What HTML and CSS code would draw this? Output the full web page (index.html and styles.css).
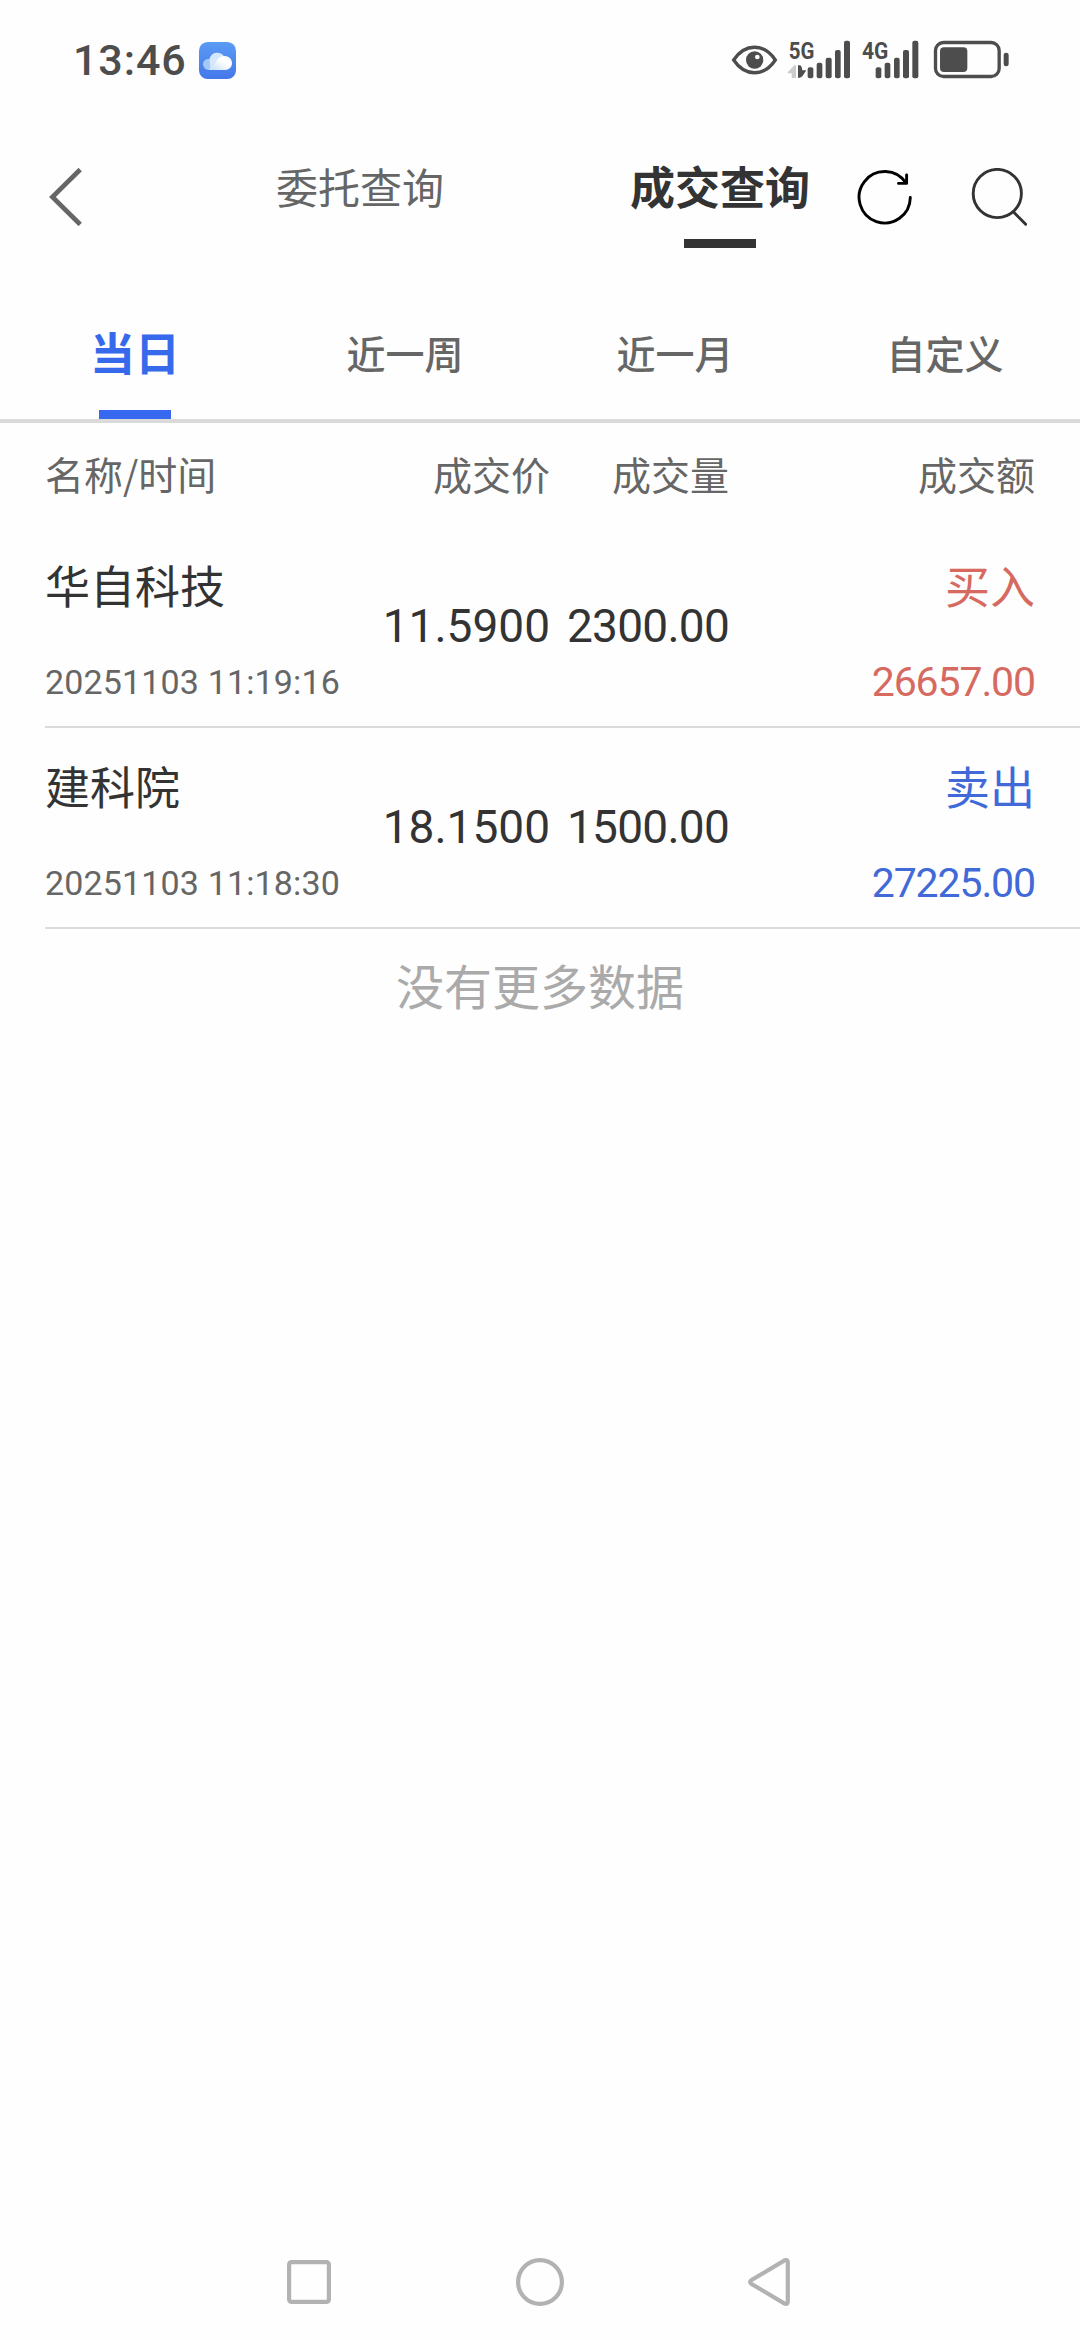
FILE: index.html
```html
<!DOCTYPE html>
<html lang="zh-CN">
<head>
<meta charset="utf-8">
<title>成交查询</title>
<link rel="stylesheet" href="styles.css">
</head>
<body>
<div class="status">
  <span class="clock">13:46</span>
  <svg width="37" height="37" viewBox="0 0 111 111">
    <defs>
      <linearGradient id="sky" x1="0" y1="0" x2="0" y2="1"><stop offset="0" stop-color="#5a9bf3"/><stop offset="1" stop-color="#4577ea"/></linearGradient>
      <linearGradient id="puff" x1="0" y1="1" x2="1" y2="0"><stop offset="0" stop-color="#c3dcfb"/><stop offset=".6" stop-color="#fff"/></linearGradient>
    </defs>
    <rect width="111" height="111" rx="26" fill="url(#sky)"/>
    <circle cx="29" cy="67" r="17" fill="#a5c8f7"/>
    <path d="M29 84C38 82 32 70 32 49A24 24 0 0 1 75 43L50 84Z" fill="#d5e7fc"/>
    <path d="M34 84C48 80 47 43 76 42C90 42 99 52 99 63C99 75 90 84 79 84Z" fill="url(#puff)"/>
  </svg>
  <svg class="indicators" width="280" height="60" viewBox="30 30 840 180" fill="#4d4d4d">
    <path d="M41 120C75 69 132 69 166 120C132 171 75 171 41 120Z" fill="none" stroke="#4d4d4d" stroke-width="10"/>
    <circle cx="104" cy="120" r="26"/><circle cx="112" cy="111" r="7" fill="#fff"/>
    <text class="net" x="206" y="116" textLength="77" lengthAdjust="spacingAndGlyphs">5G</text>
    <path d="M203 157L224 135Q228 135 228 139V174H215V160H203Z" fill="#ccc"/>
    <path d="M234 136H241Q246 139 247 151H259L247 169Q242 174 234 174Z"/>
    <rect x="263" y="142" width="17" height="33" rx="6"/><rect x="290" y="128" width="17" height="47" rx="6"/><rect x="317" y="113" width="18" height="62" rx="6"/><rect x="345" y="90" width="17" height="85" rx="6"/><rect x="372" y="62" width="18" height="113" rx="6"/>
    <text class="net" x="426" y="116" textLength="79" lengthAdjust="spacingAndGlyphs">4G</text>
    <rect x="467" y="142" width="17" height="33" rx="6"/><rect x="494" y="128" width="17" height="47" rx="6"/><rect x="522" y="113" width="17" height="62" rx="6"/><rect x="549" y="90" width="18" height="85" rx="6"/><rect x="577" y="62" width="18" height="113" rx="6"/>
    <rect x="646.500" y="67.500" width="191" height="102" rx="24" fill="none" stroke="#4d4d4d" stroke-width="10"/>
    <rect x="660" y="82" width="82" height="74" rx="12"/><rect x="851" y="98" width="15" height="41" rx="7"/>
  </svg>
</div>

<header class="header">
  <div class="back"><svg width="35" height="58" viewBox="0 0 35 58" fill="none" stroke="#666" stroke-width="4.700"><path d="M32.200 1.500L4.400 29L32.200 56.500"/></svg></div>
  <div class="page-tab">委托查询</div>
  <div class="page-tab current">成交查询</div>
  <svg class="refresh" width="56" height="58" viewBox="0 0 56 58" fill="none" stroke="#000" stroke-width="2.900" stroke-linecap="round" stroke-linejoin="round"><path d="M53.300 29.500A25.600 25.700 0 1 1 49 15M49.600 7V15.400H41.500"/></svg>
  <svg class="search" width="56" height="58" viewBox="0 0 56 58" fill="none" stroke="#333" stroke-width="2.900" stroke-linecap="round"><circle cx="26.300" cy="25.500" r="24.100"/><path d="M42.500 44L54.700 56.300"/></svg>
</header>

<nav class="ranges">
  <div class="range active">当日</div>
  <div class="range">近一周</div>
  <div class="range">近一月</div>
  <div class="range">自定义</div>
</nav>

<main>
  <div class="cols heads"><span>名称/时间</span><span>成交价</span><span>成交量</span><span>成交额</span></div>
  <section class="cols trade">
    <div class="cell"><span class="name">华自科技</span><span class="time">20251103 11:19:16</span></div>
    <span class="price">11.5900</span>
    <span class="qty">2300.00</span>
    <div class="cell end buy"><span class="name">买入</span><span class="amount">26657.00</span></div>
  </section>
  <section class="cols trade">
    <div class="cell"><span class="name">建科院</span><span class="time">20251103 11:18:30</span></div>
    <span class="price">18.1500</span>
    <span class="qty">1500.00</span>
    <div class="cell end sell"><span class="name">卖出</span><span class="amount">27225.00</span></div>
  </section>
  <p class="nomore">没有更多数据</p>
</main>

<footer class="sysnav">
  <svg width="44" height="48" viewBox="0 0 44 48"><rect x="2.100" y="4.100" width="39.800" height="39.800" rx="2.500"/></svg>
  <svg width="48" height="48" viewBox="0 0 48 48"><circle cx="24" cy="24" r="21.900"/></svg>
  <svg width="42" height="48" viewBox="0 0 42 48"><path d="M3.200 22.300L36.500 2.400Q39.800 1.200 39.800 4.500V43.500Q39.800 46.800 36.500 45.600L3.200 25.700Q1 24 3.200 22.300Z"/></svg>
</footer>
</body>
</html>
```
FILE: styles.css
```css
* { box-sizing: border-box; }
body {
  margin: 0;
  width: 1080px;
  height: 2340px;
  display: flex;
  flex-direction: column;
  background: #fefefe;
  color: #666;
  font-family: "Noto Sans CJK SC", sans-serif;
  white-space: nowrap;
  overflow: hidden;
}
svg { display: block; flex: none; }

.status { display: flex; align-items: center; height: 120px; padding: 0 70px 0 73px; }
.clock { width: 126px; font: 500 43px/60px Roboto, sans-serif; letter-spacing: .9px; color: #4d4d4d; }
.indicators { margin-left: auto; }
.net { font: 700 74px Roboto, sans-serif; }

.header { display: flex; align-items: flex-start; height: 161px; padding-top: 36px; }
.back { width: 180px; padding: 12px 0 0 48px; }
.page-tab { width: 360px; display: flex; flex-direction: column; align-items: center; font-size: 42px; line-height: 60px; }
.page-tab.current { width: 274px; margin-left: 43px; font-size: 45px; font-weight: 700; color: #333; }
.page-tab.current::after { content: ""; width: 72px; height: 9px; margin-top: 23px; background: #333; }
.refresh { margin-top: 12px; }
.search { margin: 12px 0 0 58px; }

.ranges { display: flex; height: 142px; border-bottom: 4px solid #dadada; }
.range { width: 270px; padding-top: 41px; display: flex; flex-direction: column; align-items: center; font-size: 39px; font-weight: 500; line-height: 60px; }
.range.active { justify-content: space-between; font-size: 45px; font-weight: 700; color: #3769eb; }
.range.active::after { content: ""; width: 72px; height: 9px; background: #3769f0; }

main { flex: 1; padding-left: 45px; }
.cols { display: grid; grid-template-columns: 301px 204px 179px 306px; align-items: center; padding-right: 45px; }
.heads { height: 104px; padding-bottom: 5px; font-size: 39px; }
.heads span + span { text-align: right; }
.trade { height: 201px; border-bottom: 2px solid #dbdbdb; }
.cell { display: flex; flex-direction: column; height: 199px; padding-top: 28px; gap: 39px; }
.end { align-items: flex-end; }
.name { font-size: 45px; line-height: 60px; color: #333; }
.time, .amount, .price, .qty { font-family: Roboto, sans-serif; line-height: 56px; }
.time { font-size: 34px; letter-spacing: .15px; }
.price, .qty { font-size: 46px; color: #333; text-align: right; padding-bottom: 1px; }
.qty { letter-spacing: -.75px; }
.amount { font-size: 41px; letter-spacing: -1.1px; }
.buy, .buy .name { color: #d66a61; }
.sell, .sell .name { color: #4169d8; }
.nomore { margin: 25px 45px 0 0; text-align: center; font-size: 48px; line-height: 60px; color: #aaa; }

.sysnav { display: flex; justify-content: space-between; height: 82px; padding: 0 290px 0 287px; }
.sysnav svg { fill: none; stroke: #b2b2b2; stroke-width: 4.2; }
```
